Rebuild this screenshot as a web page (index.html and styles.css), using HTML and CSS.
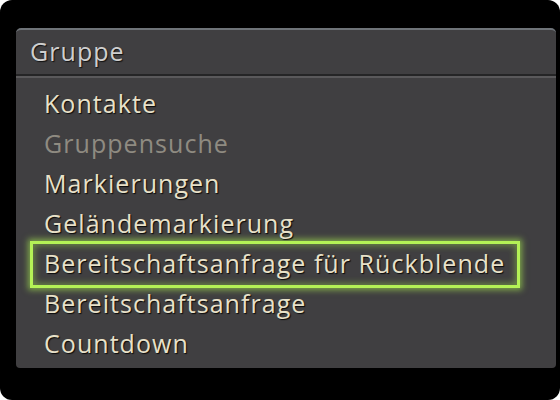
FILE: index.html
```html
<!DOCTYPE html>
<html>
<head>
<meta charset="utf-8">
<link rel="stylesheet" href="styles.css">
</head>
<body>
<div class="screen">
  <div class="panel">
    <div class="header">Gruppe</div>
    <ul class="menu">
      <li class="item">Kontakte</li>
      <li class="item disabled">Gruppensuche</li>
      <li class="item">Markierungen</li>
      <li class="item">Geländemarkierung</li>
      <li class="item selected"><span class="label">Bereitschaftsanfrage für Rückblende</span></li>
      <li class="item">Bereitschaftsanfrage</li>
      <li class="item">Countdown</li>
    </ul>
  </div>
</div>
</body>
</html>
```
FILE: styles.css
```css
html, body {
  margin: 0;
  padding: 0;
  background: #ffffff;
}
.screen {
  width: 560px;
  height: 400px;
  background: #000;
  border-radius: 12px;
  box-sizing: border-box;
  padding: 28px 4px 0 16px;
  overflow: hidden;
}
.panel {
  width: 540px;
  height: 340px;
  background: #403f41;
  border-radius: 5px 5px 4px 4px;
  border-top: 2px solid #6e7378;
  box-sizing: border-box;
  font-family: "Open Sans", "DejaVu Sans", sans-serif;
  letter-spacing: 1.05px;
}
.header {
  height: 46px;
  box-sizing: border-box;
  padding: 4px 0 0 14px;
  font-size: 25px;
  color: #cfcfcf;
  text-shadow: 1px 1px 1px #111;
  border-bottom: 2px solid #252526;
  box-shadow: 0 2px 0 #5a595b;
}
.menu {
  list-style: none;
  margin: 0;
  padding: 7px 0 0 14px;
}
.item {
  height: 40px;
  line-height: 40px;
  padding-left: 14px;
  font-size: 25px;
  color: #e8e1c9;
  text-shadow: 1px 1px 1px #0a0a0a;
  white-space: nowrap;
}
.item.disabled {
  color: #8f8b81;
  text-shadow: none;
}
.item.selected {
  width: 490px;
  box-sizing: border-box;
  border: 3px solid #b4f256;
  box-shadow: 0 0 6px 2px rgba(170, 240, 80, 0.6), inset 0 0 6px 2px rgba(170, 240, 80, 0.4);
  padding-left: 11px;
  height: 47px;
  line-height: 38px;
  margin: -2px 0 -5px 0;
}
```
